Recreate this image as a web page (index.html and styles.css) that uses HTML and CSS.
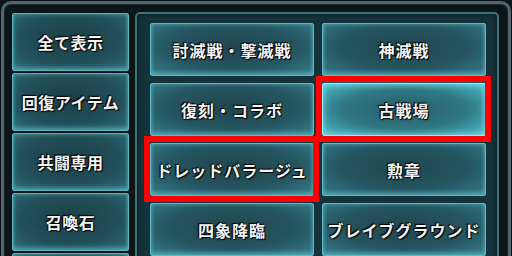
FILE: index.html
```html
<!DOCTYPE html>
<html lang="ja">
<head>
<meta charset="utf-8">
<link rel="stylesheet" href="styles.css">
</head>
<body>
<div class="window">
  <div class="side">
    <div class="btn side-btn">全て表示</div>
    <div class="btn side-btn">回復アイテム</div>
    <div class="btn side-btn">共闘専用</div>
    <div class="btn side-btn">召喚石</div>
    <div class="btn side-btn"></div>
  </div>
  <div class="panel">
    <div class="grid">
      <div class="btn">討滅戦・撃滅戦</div>
      <div class="btn">神滅戦</div>
      <div class="btn">復刻・コラボ</div>
      <div class="btn active marked">古戦場</div>
      <div class="btn marked">ドレッドバラージュ</div>
      <div class="btn">勲章</div>
      <div class="btn">四象降臨</div>
      <div class="btn">ブレイブグラウンド</div>
    </div>
  </div>
</div>
</body>
</html>
```
FILE: styles.css
```css
html, body {
  margin: 0;
  padding: 0;
  width: 512px;
  height: 256px;
  overflow: hidden;
  background: #0b1416;
}
.window {
  box-sizing: border-box;
  margin: 1px 0 0 1px;
  width: 510px;
  height: 300px;
  border: 3px solid #56646a;
  border-bottom: none;
  border-radius: 10px 10px 0 0;
  box-shadow: inset 0 0 0 1px #1d2a2d;
  background: #0c1618;
  padding: 8px 8px 0 8px;
  display: flex;
  align-items: flex-start;
  gap: 6px;
  font-family: "Noto Sans CJK JP", "Noto Sans", sans-serif;
}
.side {
  width: 117px;
  padding-top: 1px;
  display: flex;
  flex-direction: column;
  gap: 2px;
}
.panel {
  box-sizing: border-box;
  width: 364px;
  height: 280px;
  border: 2px solid #3d7078;
  border-radius: 5px 5px 0 0;
  background: #15333a;
  box-shadow: inset 0 0 6px rgba(0,0,0,0.5);
  padding: 9px 11px 0 13px;
}
.grid {
  display: grid;
  grid-template-columns: 164px 164px;
  grid-auto-rows: 53px;
  column-gap: 8px;
  row-gap: 7px;
}
.btn {
  position: relative;
  box-sizing: border-box;
  height: 53px;
  display: flex;
  align-items: center;
  justify-content: center;
  color: #f4f4f4;
  font-size: 16px;
  font-weight: bold;
  letter-spacing: 1px;
  white-space: nowrap;
  text-shadow: 0 0 2px #000, 1px 1px 1px #000, -1px -1px 1px #000;
  border: 1px solid #5fb9c4;
  border-radius: 2px;
  background: radial-gradient(ellipse at 50% 45%, #21474f 0%, #255560 55%, #357c88 100%);
  box-shadow: inset 0 0 4px rgba(110, 210, 225, 0.55), inset 0 -3px 4px rgba(110, 210, 225, 0.35);
}
.side-btn {
  height: 58px;
  letter-spacing: 0.5px;
  border-color: #58b3bf;
  background: radial-gradient(ellipse at 50% 45%, #1c3f46 0%, #22505a 60%, #33798484 100%), #2a5f69;
}
.active {
  border-color: #8eeffa;
  background: radial-gradient(ellipse at 50% 50%, #265c66 0%, #2f7883 55%, #4fc0cf 100%);
  box-shadow: inset 0 0 6px rgba(150, 240, 250, 0.8), 0 0 3px rgba(120, 230, 245, 0.6);
}
.marked::after {
  content: "";
  position: absolute;
  top: -8px;
  left: -7px;
  right: -6px;
  bottom: -7px;
  border: 6px solid #ff0000;
  pointer-events: none;
}
```
